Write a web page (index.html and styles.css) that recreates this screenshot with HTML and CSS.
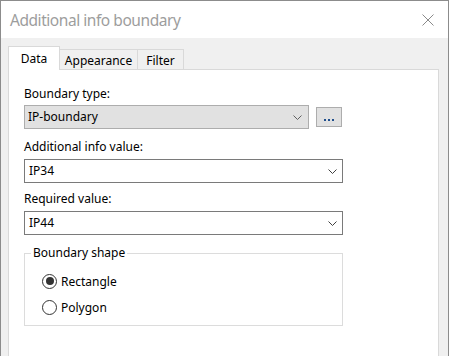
FILE: index.html
```html
<!DOCTYPE html>
<html>
<head>
<meta charset="utf-8">
<link rel="stylesheet" href="styles.css">
</head>
<body>
<div class="window">
  <div class="titlebar">
    <span class="title">Additional info boundary</span>
    <svg class="close" width="12" height="12" viewBox="0 0 12 12"><path d="M0.5 0.5 L11.5 11.5 M11.5 0.5 L0.5 11.5" stroke="#8a8a8a" stroke-width="1" fill="none"/></svg>
  </div>
  <div class="client">
    <div class="tabs">
      <div class="tab tab-data selected">Data</div>
      <div class="tab tab-appearance">Appearance</div>
      <div class="tab tab-filter">Filter</div>
    </div>
    <div class="panel">
      <div class="label">Boundary type:</div>
      <div class="row">
        <div class="combo combo-disabled combo-type">
          <span class="value">IP-boundary</span>
          <svg class="chev" width="9" height="5" viewBox="0 0 9 5"><path d="M0.5 0.5 L4.5 4.5 L8.5 0.5" stroke="#606060" fill="none"/></svg>
        </div>
        <div class="btn-dots"><span></span><span></span><span></span></div>
      </div>
      <div class="label label-2">Additional info value:</div>
      <div class="combo">
        <span class="value">IP34</span>
        <svg class="chev" width="9" height="5" viewBox="0 0 9 5"><path d="M0.5 0.5 L4.5 4.5 L8.5 0.5" stroke="#404040" fill="none"/></svg>
      </div>
      <div class="label label-3">Required value:</div>
      <div class="combo">
        <span class="value">IP44</span>
        <svg class="chev" width="9" height="5" viewBox="0 0 9 5"><path d="M0.5 0.5 L4.5 4.5 L8.5 0.5" stroke="#404040" fill="none"/></svg>
      </div>
      <fieldset class="group">
        <legend>Boundary shape</legend>
        <div class="option"><span class="radio checked"><span class="dot"></span></span><span>Rectangle</span></div>
        <div class="option"><span class="radio"></span><span>Polygon</span></div>
      </fieldset>
    </div>
  </div>
</div>
</body>
</html>
```
FILE: styles.css
```css
html, body {
  margin: 0;
  padding: 0;
}
body {
  width: 449px;
  height: 356px;
  overflow: hidden;
  font-family: "Noto Sans", "Open Sans", sans-serif;
  font-size: 12px;
  color: #000;
  background: #fff;
}
.window {
  box-sizing: border-box;
  width: 449px;
  height: 356px;
  border: 1px solid #8c8c8c;
  border-bottom: none;
  background: #f0f0f0;
  display: flex;
  flex-direction: column;
  overflow: hidden;
}
.titlebar {
  height: 37px;
  flex: none;
  background: #fff;
  display: flex;
  align-items: center;
  justify-content: space-between;
  padding: 0 14px 0 9px;
}
.title {
  font-size: 15.5px;
  letter-spacing: -0.45px;
  color: #9d9d9d;
  line-height: 20px;
  margin-top: 1px;
}
.close {
  display: block;
  margin-top: 1px;
}
.client {
  flex: 1;
  display: flex;
  flex-direction: column;
  padding: 8px 9px 0 7px;
}
.tabs {
  display: flex;
  align-items: flex-end;
  height: 23px;
  flex: none;
}
.tab {
  box-sizing: border-box;
  height: 20px;
  border: 1px solid #d9d9d9;
  border-bottom: none;
  background: #f0f0f0;
  line-height: 19px;
  padding-top: 1px;
  text-align: center;
  margin-left: -1px;
  position: relative;
}
.tab-data {
  width: 52px;
  margin-left: 0;
}
.tab-appearance {
  width: 79px;
}
.tab-filter {
  width: 47px;
}
.tab.selected {
  height: 24px;
  margin-bottom: -1px;
  background: #fff;
  z-index: 2;
  padding-top: 1px;
  line-height: 22px;
}
.panel {
  flex: 1;
  border: 1px solid #d9d9d9;
  border-bottom: none;
  background: #fff;
  padding: 16px 0 0 15px;
}
.label {
  line-height: 16px;
  height: 16px;
}
.label-2 {
  margin-top: 10px;
}
.label-3 {
  margin-top: 8px;
}
.row {
  display: flex;
  align-items: center;
  gap: 7px;
  margin-top: 3px;
}
.combo {
  box-sizing: border-box;
  width: 319px;
  height: 24px;
  border: 1px solid #7a7a7a;
  background: #fff;
  display: flex;
  align-items: center;
  justify-content: space-between;
  padding: 0 5px 0 4px;
  margin-top: 4px;
}
.combo-disabled {
  border-color: #adadad;
  background: #e1e1e1;
}
.combo-type {
  width: 285px;
  margin-top: 0;
  padding-left: 3px;
  padding-right: 6px;
}
.value {
  line-height: 16px;
}
.chev {
  display: block;
}
.btn-dots {
  box-sizing: border-box;
  width: 26px;
  height: 20px;
  border: 1px solid #adadad;
  background: #e1e1e1;
  display: flex;
  align-items: flex-end;
  justify-content: center;
  gap: 2px;
  padding-bottom: 5px;
}
.btn-dots span {
  width: 2px;
  height: 2px;
  background: #1f4e8c;
}
.group {
  box-sizing: border-box;
  width: 319px;
  margin: 10px 0 0 0;
  padding: 12px 0 10px 6px;
  border: 1px solid #dcdcdc;
  min-width: 0;
}
.group legend {
  padding: 0 2px;
  line-height: 16px;
}
.option {
  display: flex;
  align-items: center;
  height: 16px;
  gap: 4px;
  padding-left: 11px;
}
.option + .option {
  margin-top: 10px;
}
.radio {
  box-sizing: border-box;
  width: 15px;
  height: 15px;
  border: 1px solid #333;
  border-radius: 50%;
  background: #fff;
  display: flex;
  align-items: center;
  justify-content: center;
  flex: none;
}
.radio .dot {
  width: 8px;
  height: 8px;
  border-radius: 50%;
  background: #333;
}
```
